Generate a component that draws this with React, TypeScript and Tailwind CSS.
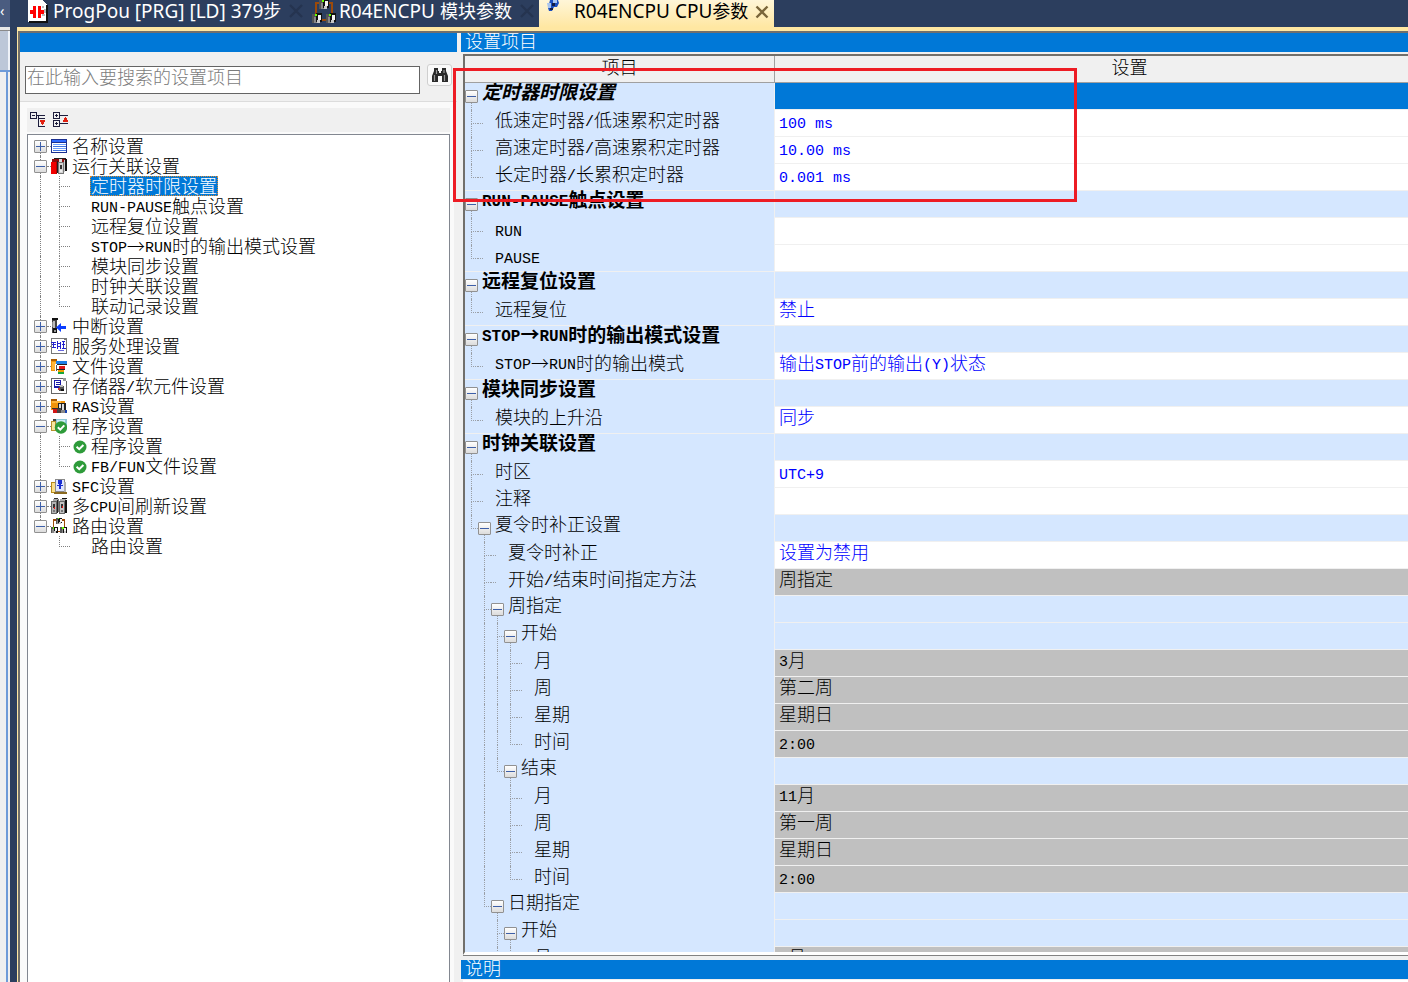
import React, { useState } from "react";

const CJK = "font-['Noto_Sans_CJK_SC',sans-serif]";

/** Sets ASCII runs in the half-width face and everything else in the full-width one. */
function Txt({ children, large = false }: { children: string; large?: boolean }) {
  return (
    <>
      {children.split(/([\x20-\x7e]+)/).map((run, i) =>
        i % 2 === 1 ? (
          <span
            key={i}
            className={`align-[1px] font-['Liberation_Mono',monospace] leading-none ${large ? "text-[16px]" : "text-[15px]"}`}
          >
            {run}
          </span>
        ) : (
          run
        )
      )}
    </>
  );
}

type R = [number, number, number, number, string];

function Pixels({ rects, children }: { rects?: R[]; children?: React.ReactNode }) {
  return (
    <svg viewBox="0 0 16 16" className="size-4 shrink-0" aria-hidden="true">
      <g shapeRendering="crispEdges">
        {rects?.map(([x, y, w, h, f], i) => (
          <rect key={i} x={x} y={y} width={w} height={h} fill={f} />
        ))}
      </g>
      {children}
    </svg>
  );
}

const rackBody: R[] = [
  [3, 0, 4, 1, "#333"], [2, 1, 5, 2, "#aaa"], [0, 3, 6, 13, "#666"], [1, 4, 4, 11, "#b4b4b4"],
  [11, 0, 5, 1, "#111"], [9, 1, 6, 2, "#aaa"], [8, 3, 6, 13, "#666"], [9, 4, 4, 11, "#c4c4c4"],
  [14, 2, 2, 13, "#111"], [6, 2, 1, 13, "#222"], [7, 1, 1, 13, "#777"], [10, 6, 2, 4, "#333"], [10, 12, 2, 2, "#777"],
  [2, 6, 2, 4, "#333"], [3, 9, 1, 2, "#e11"], [11, 8, 1, 2, "#e11"], [2, 12, 2, 2, "#777"],
];

function Check() {
  return (
    <svg viewBox="0 0 14 14" className="size-[14px] shrink-0" aria-hidden="true">
      <circle cx="7" cy="7" r="6.5" fill="#2e9b3a" />
      <path d="M3.600 6.800 6.200 9.200l4.200-4.200" fill="none" stroke="#fff" strokeWidth="2" />
    </svg>
  );
}

function NetworkNode({ x, y }: { x: number; y: number }) {
  return (
    <g>
      <rect x={x} y={y + 1} width="4" height="9" fill="#555" />
      <rect x={x + 2} y={y + 4} width="3" height="6" fill="#888" />
      <rect x={x + 4} y={y} width="6" height="9" fill="#111" />
      <rect x={x + 6} y={y + 2} width="3" height="5" fill="#f4f4f4" />
      <rect x={x + 5} y={y + 7} width="3" height="3" fill="#c8c8c8" />
      <rect x={x + 3} y={y + 1} width="2" height="2" fill="#6f0" />
    </g>
  );
}

function Network({ className }: { className: string }) {
  return (
    <svg viewBox="0 0 24 24" className={className} shapeRendering="crispEdges" aria-hidden="true">
      <path d="M4 14V3h16v11M8 20h8" fill="none" stroke="#9c4a0a" strokeWidth="2.4" />
      <NetworkNode x={7} y={-1} />
      <NetworkNode x={0} y={13} />
      <NetworkNode x={14} y={13} />
    </svg>
  );
}

const icons: Record<string, React.ReactNode> = {
  list: (
    <Pixels
      rects={[
        [0, 1, 16, 14, "#1b2f8f"], [1, 2, 14, 2, "#2f6bff"], [1, 5, 14, 9, "#fff"],
        [2, 6, 13, 1, "#6fa0ff"], [2, 8, 13, 1, "#3f74e0"], [2, 10, 13, 1, "#6fa0ff"], [2, 12, 13, 1, "#3f74e0"],
      ]}
    />
  ),
  plc: (
    <Pixels
      rects={[
        [3, 0, 12, 1, "#222"], [1, 1, 13, 3, "#8f0b0b"], [8, 1, 3, 3, "#ddd"], [0, 4, 6, 12, "#f00000"],
        [5, 4, 1, 12, "#b00000"], [6, 3, 1, 12, "#222"], [7, 4, 6, 12, "#777"], [8, 5, 4, 10, "#d4d4d4"],
        [9, 7, 2, 4, "#333"], [9, 12, 2, 2, "#eee"], [13, 2, 1, 12, "#ccc"], [14, 1, 2, 12, "#111"],
      ]}
    />
  ),
  interrupt: (
    <Pixels
      rects={[
        [1, 0, 6, 2, "#111"], [1, 2, 5, 13, "#444"], [2, 3, 2, 9, "#bbb"], [2, 10, 4, 5, "#111"], [3, 12, 2, 2, "#999"], [1, 4, 1, 5, "#888"],
      ]}
    >
      <path d="M5 9.5 10 5v3h5v3h-5v3z" fill="#0a3cff" />
    </Pixels>
  ),
  service: (
    <Pixels
      rects={[
        [0, 0, 16, 16, "#777"], [1, 1, 14, 14, "#fff"], [0, 4, 5, 1, "#22c"], [1, 6, 4, 1, "#22c"], [2, 4, 1, 5, "#22c"],
        [1, 9, 4, 1, "#22c"], [6, 3, 1, 8, "#22c"], [7, 5, 2, 1, "#22c"], [7, 8, 2, 1, "#22c"], [9, 4, 1, 7, "#22c"],
        [11, 3, 3, 1, "#22c"], [11, 6, 3, 1, "#22c"], [12, 4, 1, 7, "#22c"], [11, 10, 4, 1, "#22c"], [7, 12, 6, 1, "#66d"], [13, 1, 2, 1, "#777"],
      ]}
    />
  ),
  file: (
    <Pixels
      rects={[
        [0, 1, 6, 2, "#a85a00"], [0, 3, 14, 10, "#f0930a"], [1, 4, 4, 8, "#ffb63a"], [5, 3, 11, 3, "#1b7fe8"],
        [4, 6, 10, 7, "#fff"], [6, 6, 10, 1, "#222"], [8, 8, 6, 3, "#e01818"], [6, 11, 8, 1, "#222"],
        [7, 12, 6, 2, "#f0a000"], [7, 14, 6, 2, "#16a83a"], [5, 7, 1, 6, "#555"],
      ]}
    />
  ),
  memory: (
    <Pixels
      rects={[
        [0, 0, 12, 1, "#666"], [0, 0, 1, 16, "#666"], [0, 15, 16, 1, "#666"], [15, 3, 1, 13, "#666"], [1, 1, 14, 14, "#fff"],
        [12, 0, 3, 3, "#999"], [3, 2, 7, 8, "#1a1aa8"], [4, 3, 5, 5, "#fff"], [5, 4, 4, 1, "#1a1aa8"], [5, 6, 4, 1, "#1a1aa8"],
        [8, 8, 5, 5, "#555"], [9, 7, 3, 2, "#bbb"], [10, 11, 3, 2, "#111"], [7, 10, 2, 2, "#c33"],
      ]}
    />
  ),
  ras: (
    <Pixels
      rects={[
        [0, 1, 6, 2, "#a85a00"], [0, 3, 14, 9, "#f0930a"], [1, 3, 9, 2, "#ffb63a"], [7, 5, 8, 9, "#222"], [8, 6, 2, 7, "#ddd"],
        [11, 6, 2, 7, "#ddd"], [2, 11, 4, 4, "#d01515"], [6, 10, 4, 5, "#444"], [10, 12, 4, 3, "#888"], [14, 12, 2, 3, "#1540b0"], [1, 10, 8, 1, "#333"],
      ]}
    />
  ),
  program: (
    <Pixels rects={[[0, 3, 6, 10, "#b9922e"], [1, 4, 3, 8, "#f7e6a0"], [5, 1, 11, 8, "#8fc7d6"], [6, 2, 8, 3, "#cdeef5"], [2, 1, 3, 2, "#444"]]}>
      <circle cx="10" cy="9.5" r="6.2" fill="#2e9b3a" />
      <path d="M6.8 9.2 9.3 11.600l4-4.200" fill="none" stroke="#fff" strokeWidth="2" />
    </Pixels>
  ),
  sfc: (
    <Pixels
      rects={[
        [0, 4, 5, 11, "#b98a18"], [1, 5, 3, 9, "#fbe08a"], [4, 1, 10, 13, "#8a8a8a"], [5, 2, 8, 11, "#dfe6ff"], [13, 4, 2, 10, "#b0b0b0"],
        [7, 2, 4, 4, "#1a2fd0"], [6, 7, 6, 1, "#1a2fd0"], [8, 6, 2, 5, "#1a2fd0"], [3, 14, 13, 2, "#8a6a20"],
      ]}
    />
  ),
  multi: <Pixels rects={rackBody} />,
  route: <Network className="size-4 shrink-0" />,
};

/** Small square that folds and unfolds a branch. */
function Fold({ open, onClick, label }: { open: boolean; onClick?: () => void; label: string }) {
  return (
    <button
      type="button"
      onClick={onClick}
      aria-expanded={open}
      aria-label={label}
      className="relative size-[13px] shrink-0 rounded-[1px] border border-[#919191] bg-linear-to-b from-white to-[#dcdcdc]"
    >
      <span className="absolute top-[5px] left-[1px] h-px w-[9px] bg-[#3d5fa8]" />
      {!open && <span className="absolute top-[1px] left-[5px] h-[9px] w-px bg-[#3d5fa8]" />}
    </button>
  );
}

type Node = { t: string; icon?: string; kids?: string[]; open?: boolean; check?: boolean };

const nodes: Node[] = [
  { t: "名称设置", icon: "list", kids: [] },
  {
    t: "运行关联设置",
    icon: "plc",
    open: true,
    kids: ["定时器时限设置", "RUN-PAUSE触点设置", "远程复位设置", "STOP→RUN时的输出模式设置", "模块同步设置", "时钟关联设置", "联动记录设置"],
  },
  { t: "中断设置", icon: "interrupt", kids: [] },
  { t: "服务处理设置", icon: "service", kids: [] },
  { t: "文件设置", icon: "file", kids: [] },
  { t: "存储器/软元件设置", icon: "memory", kids: [] },
  { t: "RAS设置", icon: "ras", kids: [] },
  { t: "程序设置", icon: "program", open: true, check: true, kids: ["程序设置", "FB/FUN文件设置"] },
  { t: "SFC设置", icon: "sfc", kids: [] },
  { t: "多CPU间刷新设置", icon: "multi", kids: [] },
  { t: "路由设置", icon: "route", open: true, kids: ["路由设置"] },
];

const dot = "border-dotted border-[#808080]";

function SettingsTree() {
  const [closed, setClosed] = useState<Record<number, boolean>>({});
  return (
    <ul className={`flex-1 overflow-hidden border-t border-r border-l border-[#828790] bg-white pt-px pl-[6px] text-[18px] leading-[18px] font-light text-black ${CJK}`}>
      {nodes.map((n, i) => {
        const last = i === nodes.length - 1;
        const open = !!n.open && !closed[i];
        return (
          <li key={i}>
            <div className="flex h-5">
              <span className="flex w-[13px] shrink-0 flex-col">
                <span className={`ml-[6px] h-1 ${i > 0 ? `border-l ${dot}` : ""}`} />
                <Fold open={open} label={n.t} onClick={() => setClosed({ ...closed, [i]: open })} />
                <span className={`ml-[6px] flex-1 ${last ? "" : `border-l ${dot}`}`} />
              </span>
              <span className={`h-[11px] w-1 shrink-0 border-b ${dot}`} />
              <span className="flex w-4 shrink-0 items-center">{icons[n.icon!]}</span>
              <span className="pl-[5px] whitespace-pre">
                <Txt>{n.t}</Txt>
              </span>
            </div>
            {open &&
              n.kids!.map((k, j) => (
                <div key={k} className="flex h-5">
                  <span className="w-[17px] shrink-0 pl-[6px]">
                    {!last && <span className={`block h-5 border-l ${dot}`} />}
                  </span>
                  <span className="flex w-[22px] shrink-0 flex-col pr-[3px] pl-2">
                    <span className={`h-[11px] shrink-0 border-b border-l ${dot}`} />
                    {j < n.kids!.length - 1 && <span className={`flex-1 border-l ${dot}`} />}
                  </span>
                  <span className="flex w-[17px] shrink-0 items-center pt-0.5">{n.check && <Check />}</span>
                  {i === 1 && j === 0 ? (
                    <a href="#timer" className="border border-dotted border-[#e08a30] bg-[#0078d7] leading-4 whitespace-pre text-white">
                      <Txt>{k}</Txt>
                    </a>
                  ) : (
                    <a href="#item" className="px-px whitespace-pre">
                      <Txt>{k}</Txt>
                    </a>
                  )}
                </div>
              ))}
          </li>
        );
      })}
    </ul>
  );
}

/** d: depth, k: row kind, v: value, g: value shown but disabled */
type Row = { t: string; d: number; k: "group" | "leaf"; v?: string; g?: boolean };
const G = (d: number, t: string): Row => ({ t, d, k: "group" });
const L = (d: number, t: string, v = "", g = false): Row => ({ t, d, k: "leaf", v, g });

const rows: Row[] = [
  G(0, "定时器时限设置"),
  L(1, "低速定时器/低速累积定时器", "100 ms"),
  L(1, "高速定时器/高速累积定时器", "10.00 ms"),
  L(1, "长定时器/长累积定时器", "0.001 ms"),
  G(0, "RUN-PAUSE触点设置"),
  L(1, "RUN"),
  L(1, "PAUSE"),
  G(0, "远程复位设置"),
  L(1, "远程复位", "禁止"),
  G(0, "STOP→RUN时的输出模式设置"),
  L(1, "STOP→RUN时的输出模式", "输出STOP前的输出(Y)状态"),
  G(0, "模块同步设置"),
  L(1, "模块的上升沿", "同步"),
  G(0, "时钟关联设置"),
  L(1, "时区", "UTC+9"),
  L(1, "注释"),
  G(1, "夏令时补正设置"),
  L(2, "夏令时补正", "设置为禁用"),
  L(2, "开始/结束时间指定方法", "周指定", true),
  G(2, "周指定"),
  G(3, "开始"),
  L(4, "月", "3月", true),
  L(4, "周", "第二周", true),
  L(4, "星期", "星期日", true),
  L(4, "时间", "2:00", true),
  G(3, "结束"),
  L(4, "月", "11月", true),
  L(4, "周", "第一周", true),
  L(4, "星期", "星期日", true),
  L(4, "时间", "2:00", true),
  G(2, "日期指定"),
  G(3, "开始"),
  L(4, "月", "3月", true),
];

/** Whether the vertical guide at depth c goes on below row i. */
function continues(i: number, c: number) {
  for (let j = i + 1; j < rows.length; j++) {
    if (rows[j].d <= c) return false;
    if (rows[j].d === c + 1) return true;
  }
  return i >= rows.length - 3 && c >= 2;
}

const isAscii = (s: string) => /^[\x20-\x7e]+$/.test(s);

function NameCell({ row, i }: { row: Row; i: number }) {
  const group = row.k === "group";
  const top = group && row.d === 0;
  const style = top ? (i === 0 ? "text-[19px] font-bold italic" : "text-[19px] font-bold") : "font-light";
  return (
    <div className="flex h-[26px]">
      {Array.from({ length: row.d }, (_, c) => {
        const own = c === row.d - 1;
        const on = continues(i, c);
        return (
          <span key={c} className="flex w-[13px] shrink-0 flex-col pl-[6px]">
            {(own || on) && <span className={`h-[14px] shrink-0 border-l ${own ? "border-b" : ""} border-dotted border-[#9a9fa6]`} />}
            {on && <span className="-mb-px flex-1 border-l border-dotted border-[#9a9fa6]" />}
          </span>
        );
      })}
      {group ? (
        <span className="flex w-[17px] shrink-0 flex-col pt-[7px]">
          <Fold open label={row.t} />
          <span className="-mb-px ml-[6px] flex-1 border-l border-dotted border-[#9a9fa6]" />
        </span>
      ) : (
        <span className="w-[17px] shrink-0">
          <span className="block h-[14px] w-[5px] border-b border-dotted border-[#9a9fa6]" />
        </span>
      )}
      <span className={`whitespace-pre ${style} ${group ? "" : isAscii(row.t) ? "pt-[3px]" : "pt-px"}`}>
        <Txt large={top}>{row.t}</Txt>
      </span>
    </div>
  );
}

function SettingsTable() {
  return (
    <table className={`w-full table-fixed border-separate border-spacing-0 text-[18px] leading-4 text-black ${CJK}`}>
      <thead>
        <tr className="h-[27px] bg-[#f0f0f0] font-light">
          <th scope="col" className="w-[310px] border-r border-b border-[#a0a0a0] p-0 pb-1.5 font-light">项目</th>
          <th scope="col" className="border-b border-[#a0a0a0] p-0 pb-1.5 pl-[76px] font-light">设置</th>
        </tr>
      </thead>
      <tbody>
        {rows.map((r, i) => {
          const next = rows[i + 1];
          const line = next && next.d === 0 ? "border-[#f0f0f0]" : "border-[#d5e7ff]";
          const bg = i === 0 ? "bg-[#0078d7]" : r.k === "group" ? "bg-[#d5e7ff]" : r.g ? "bg-[#c0c0c0]" : "bg-white";
          return (
            <tr key={i} className="h-[27px]">
              <td className="border-r border-[#f0f0f0] bg-[#d5e7ff] p-0 align-top">
                <div className={`border-b ${line}`}>
                  <NameCell row={r} i={i} />
                </div>
              </td>
              <td className="p-0 align-top">
                <div
                  className={`h-[27px] border-b border-[#f0f0f0] pl-1 font-light whitespace-pre ${bg} ${r.g ? "text-black" : "text-[#0000ff]"} ${
                    r.v && isAscii(r.v) ? "pt-[3px]" : "pt-px"
                  }`}
                >
                  <Txt>{r.v ?? ""}</Txt>
                </div>
              </td>
            </tr>
          );
        })}
      </tbody>
    </table>
  );
}

function TabClose() {
  return (
    <svg viewBox="0 0 14 14" className="mt-1 ml-2 size-[14px] shrink-0" aria-hidden="true">
      <path d="M1 1l12 12M13 1 1 13" stroke="#253450" strokeWidth="2.4" />
    </svg>
  );
}

function Tabs() {
  const font = "font-['Noto_Sans','Noto_Sans_CJK_SC',sans-serif]";
  return (
    <nav className={`flex h-[27px] shrink-0 overflow-hidden bg-[#2c3e5e] text-[19px] leading-[22px] whitespace-nowrap text-white ${font}`}>
      <div className="w-[10px] shrink-0 bg-[#4a5c80] text-[14px]">‹</div>
      <a href="#prog" className="flex w-[294px] shrink-0 pl-[18px]">
        <svg viewBox="0 0 20 24" className="h-6 w-5 shrink-0" shapeRendering="crispEdges" aria-hidden="true">
          <path d="M0 0h15l4 5v17H0z" fill="#fff" />
          <path d="M19 5v17H1" fill="none" stroke="#111" strokeWidth="1.6" />
          <path d="M14 6h2v2h-2zM14 14h3v2h-3zM16 9h2v4h-2z" fill="#bbb" />
          <path d="M2 10h3V6h3v12H5v-4H2zM10 6h3v4h3v4h-3v4h-3z" fill="#f00" />
        </svg>
        <span className="pl-[5px]">
          ProgPou [PRG] [LD] 379<span className="text-[18px]">步</span>
        </span>
        <TabClose />
      </a>
      <a href="#module" className="flex w-[235px] shrink-0 pl-2">
        <Network className="size-6 shrink-0" />
        <span className="pl-[3px]">
          R04ENCPU <span className="text-[18px]">模块参数</span>
        </span>
        <TabClose />
      </a>
      <div className="flex w-[235px] shrink-0 bg-linear-to-b from-[#fff6d8] to-[#ffe7a2] pl-2 text-black">
        <svg viewBox="0 0 14 12" className="h-3 w-[14px] shrink-0" aria-hidden="true">
          <path d="M3 0h8l1 3-2 4H7l-2 4H2l-1-3z" fill="#1c4fc0" />
          <path d="M0 3h4v5H1zM6 0h4v3H6z" fill="#a9c4ee" />
          <path d="M5 3h3v3H5zM3 8h3v2H3z" fill="#111c44" />
        </svg>
        <a href="#cpu" className="pl-[13px]">
          R04ENCPU CPU<span className="text-[18px]">参数</span>
        </a>
        <button type="button" aria-label="关闭" className="ml-[7px]">
          <svg viewBox="0 0 14 14" className="-mt-1 size-[14px]" aria-hidden="true">
            <path d="M1.5 1.5l11 11M12.5 1.5l-11 11" stroke="#7a653a" strokeWidth="2.4" />
          </svg>
        </button>
      </div>
    </nav>
  );
}

function PanelTitle({ children, className }: { children?: string; className: string }) {
  return <h2 className={`shrink-0 bg-[#0078d7] pl-1 text-[18px] leading-[14px] font-light text-white ${CJK} ${className}`}>{children}</h2>;
}

export default function App() {
  return (
    <div className="relative flex h-screen flex-col overflow-hidden bg-[#f0f0f0]">
      <Tabs />
      <div className="flex min-h-0 flex-1">
        <div className="flex w-[10px] shrink-0 flex-col">
          <div className="h-[4px] border-b border-[#8a8a8a] bg-[#e8e8e8]" />
          <div className="h-[39px] border-r-2 border-[#eef2f8] bg-[#bcc7d8]" />
          <div className="flex flex-1 border-t-2 border-[#6f9bd8] pr-0.5">
            <div className="flex-1 border-r-2 border-[#6f9bd8] bg-[#f0f0f0]" />
          </div>
        </div>
        <div className="w-[7px] shrink-0 bg-[#2c3e5e]" />
        <div className="flex min-w-0 flex-1 flex-col border-t-4 border-l border-[#ffe7a2]">
          <div className="flex min-h-0 flex-1 border-t-2 border-l-2 border-[#716f6b]">
            <section className="flex w-[437px] shrink-0 flex-col">
              <PanelTitle className="h-[19px]" />
              <div className="flex h-[50px] shrink-0 items-start border-b border-[#dcdcdc] pt-3 pl-[5px]">
                <input
                  type="text"
                  aria-label="搜索"
                  placeholder="在此输入要搜索的设置项目"
                  className={`mt-[2px] h-7 w-[395px] border border-[#646464] bg-white px-px pb-2 text-[18px] leading-[18px] font-light placeholder:text-[#7c7c7c] ${CJK}`}
                />
                <button type="button" aria-label="搜索" className="ml-[7px] flex h-[22px] w-[25px] items-center justify-center rounded-[3px] border border-[#cfcfcf] bg-[#fafafa]">
                  <svg viewBox="0 0 18 16" className="h-4 w-[18px]" aria-hidden="true">
                    <path d="M3 1h4v3h1v2h2V4h1V1h4v3l2 5v6h-6V9H7v6H1V9l2-5z" fill="#2a2a2a" />
                    <path d="M3.500 8v6M13.500 8v6M5.500 3v4M13 3v3" stroke="#999" strokeWidth="1.2" />
                  </svg>
                </button>
              </div>
              <div className="flex min-h-0 w-[434px] flex-1 flex-col bg-[#fafafa] pt-[6px] pr-1 pl-[7px]">
                <div className="mb-0.5 flex h-6 shrink-0 items-center gap-[7px] bg-[#f0f0f0] pl-[3px]">
                  <button type="button" aria-label="全部折叠">
                    <svg viewBox="0 0 16 16" className="size-4" shapeRendering="crispEdges" fill="none" stroke="#1c1c3c" aria-hidden="true">
                      <path d="M.5 .5h6v6h-6zM2 3.500h3M7 3.500h8M8.500 4v11M9 6.500h6M9 14.500h6" />
                      <path d="M10 8h5v2h-1v2h-1v1h-1v-1h-1v-2h-1z" fill="#e02010" stroke="none" />
                    </svg>
                  </button>
                  <button type="button" aria-label="全部展开">
                    <svg viewBox="0 0 16 16" className="size-4" shapeRendering="crispEdges" fill="none" stroke="#1c1c3c" aria-hidden="true">
                      <path d="M.5 .5h6v6h-6zM.5 8.500h6v6h-6zM2 3.500h3M3.500 2v3M2 11.500h3M3.500 10v3M7 3.500h8M7 11.500h8" />
                      <path d="M10 10V8h1V6h1V5h1v1h1v2h1v2z" fill="#e02010" stroke="none" />
                    </svg>
                  </button>
                </div>
                <SettingsTree />
              </div>
            </section>
            <section className="ml-1 flex min-w-0 flex-1 flex-col">
              <PanelTitle className="h-[19px]">设置项目</PanelTitle>
              <div className="mt-0.5 ml-0.5 flex h-[902px] min-h-0 flex-col border-b border-[#828282]">
                <div className="min-h-0 flex-1 overflow-hidden border-t-2 border-b-[3px] border-l-2 border-t-[#716f6b] border-b-white border-l-[#716f6b]">
                  <SettingsTable />
                </div>
              </div>
              <PanelTitle className="mt-1 h-[19px]">说明</PanelTitle>
              <div className="mt-px ml-0.5 flex-1 border-t-2 border-white" />
            </section>
          </div>
        </div>
      </div>
      <div className="pointer-events-none absolute top-[68px] left-[453px] h-[134px] w-[624px] border-[3px] border-[#ed1c24]" />
    </div>
  );
}
